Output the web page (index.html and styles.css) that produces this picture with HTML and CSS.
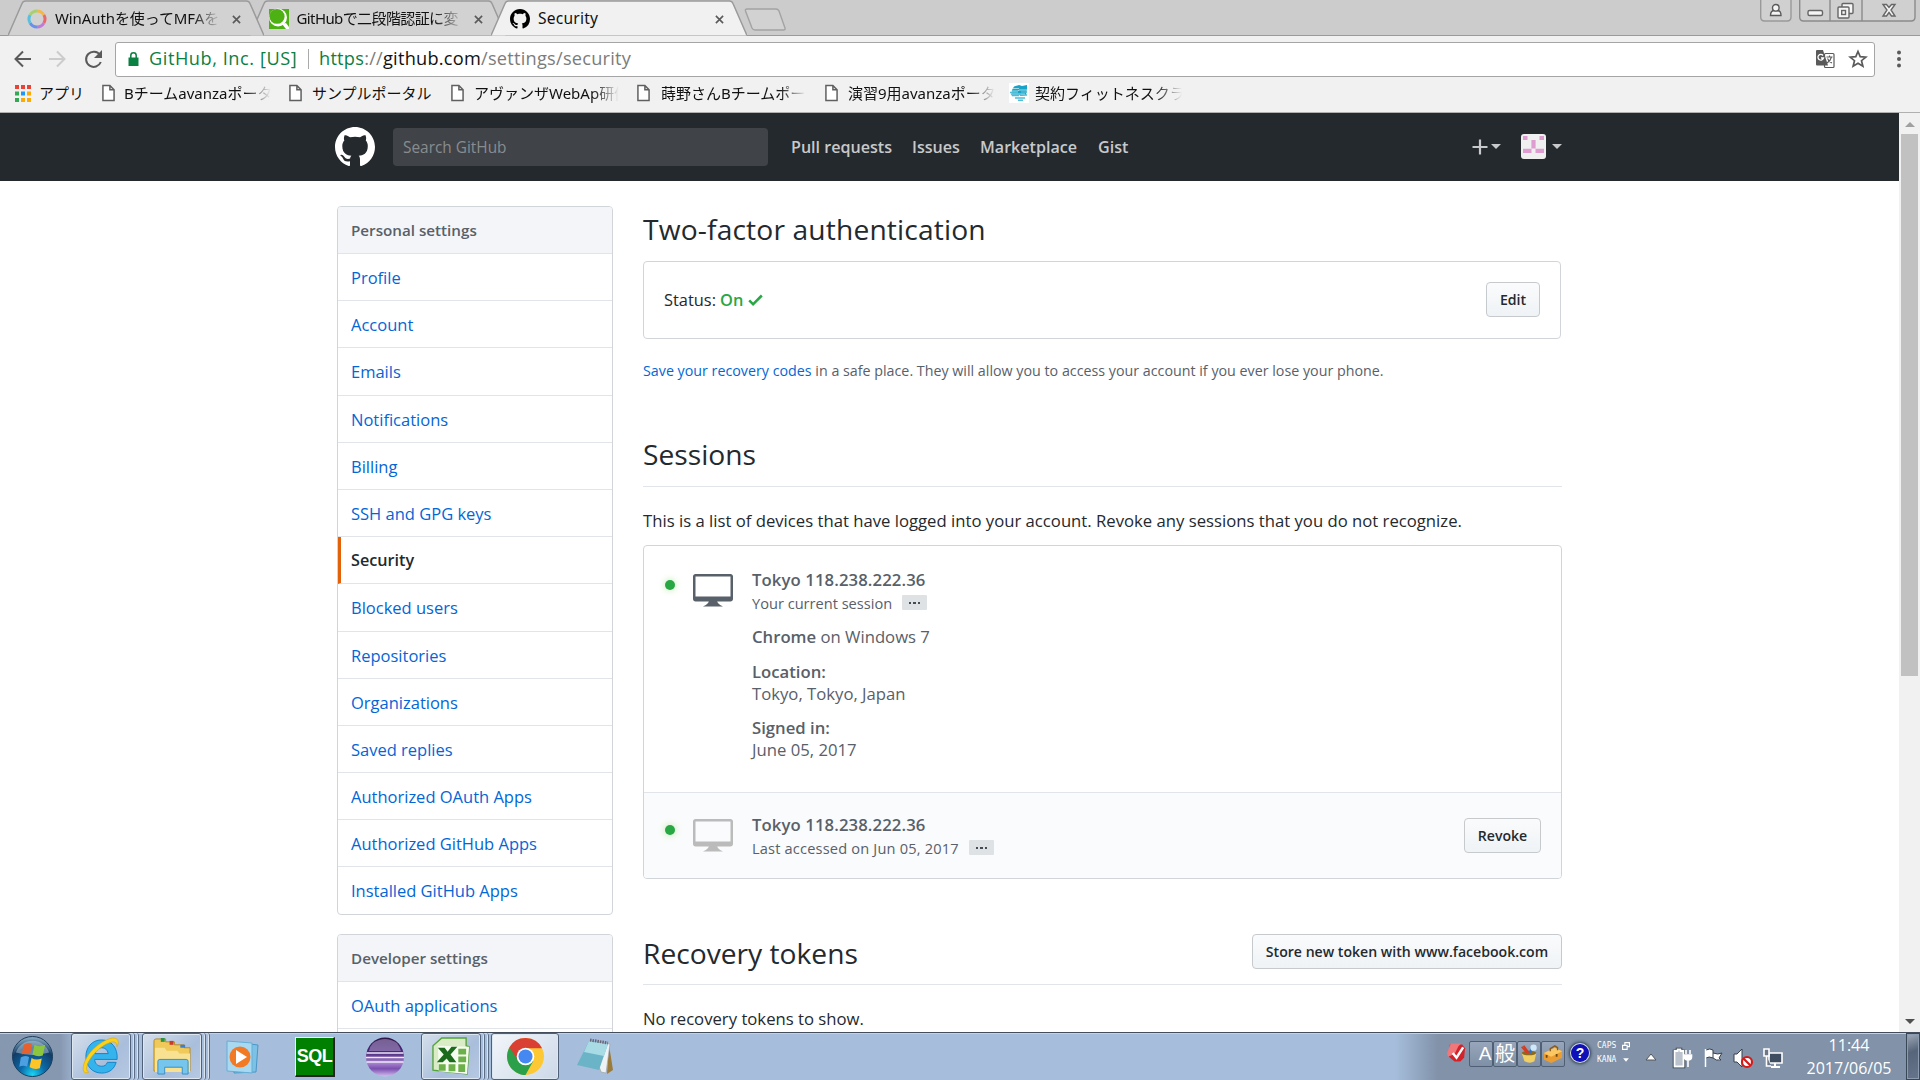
FILE: index.html
```html
<!DOCTYPE html>
<html lang="en">
<head>
<meta charset="utf-8">
<title>Security</title>
<link rel="stylesheet" href="styles.css">
</head>
<body>
<svg class="defs" width="0" height="0">
  <defs>
    <symbol id="mark" viewBox="0 0 16 16"><path d="M8 0C3.58 0 0 3.58 0 8c0 3.54 2.29 6.53 5.47 7.59.4.07.55-.17.55-.38 0-.19-.01-.82-.01-1.49-2.01.37-2.53-.49-2.69-.94-.09-.23-.48-.94-.82-1.13-.28-.15-.68-.52-.01-.53.63-.01 1.08.58 1.23.82.72 1.21 1.87.87 2.33.66.07-.52.28-.87.51-1.07-1.78-.2-3.64-.89-3.64-3.95 0-.87.31-1.59.82-2.15-.08-.2-.36-1.02.08-2.12 0 0 .67-.21 2.2.82.64-.18 1.32-.27 2-.27.68 0 1.36.09 2 .27 1.53-1.04 2.2-.82 2.2-.82.44 1.1.16 1.92.08 2.12.51.56.82 1.27.82 2.15 0 3.07-1.87 3.75-3.65 3.95.29.25.54.73.54 1.48 0 1.07-.01 1.93-.01 2.2 0 .21.15.46.55.38A8.013 8.013 0 0 0 16 8c0-4.42-3.58-8-8-8z"/></symbol>
    <symbol id="desktop" viewBox="0 0 16 16"><path d="M15 2H1c-.55 0-1 .45-1 1v9c0 .55.45 1 1 1h5.34c-.25.61-.86 1.39-2.34 2h8c-1.48-.61-2.09-1.39-2.34-2H15c.55 0 1-.45 1-1V3c0-.55-.45-1-1-1zm0 9H1V3h14v8z"/></symbol>
    <symbol id="tabshape" viewBox="0 0 256 36"><path d="M0 35.500L14 3.500Q15 1 17.500 1H238.500Q241 1 242 3.500L256 35.500" stroke="#9a9a9a" stroke-width="1.500"/></symbol>
    <symbol id="close" viewBox="0 0 10 10"><path d="M1 1l8 8M9 1l-8 8" stroke="#5a5a5a" stroke-width="1.800" fill="none"/></symbol>
    <symbol id="page" viewBox="0 0 14 18"><path d="M1 1h7.500L13 5.500V17H1z M8.500 1v4.500H13" fill="#fff" stroke="#5f5f5f" stroke-width="1.600"/></symbol>
  </defs>
</svg>

<div class="tabstrip">
  <div class="tab tab-a">
    <svg class="shape"><use href="#tabshape"/></svg>
    <svg class="fav" viewBox="0 0 20 20" fill="none" stroke-width="3"><path d="M10 2a8 8 0 0 1 6.900 4" stroke="#f2b84b"/><path d="M16.900 6a8 8 0 0 1 0 8" stroke="#e8686d"/><path d="M16.900 14A8 8 0 0 1 10 18" stroke="#c07ad8"/><path d="M10 18a8 8 0 0 1-6.900-4" stroke="#6c8fe8"/><path d="M3.100 14a8 8 0 0 1 0-8" stroke="#59bfe0"/><path d="M3.100 6A8 8 0 0 1 10 2" stroke="#a9cf70"/></svg>
    <span class="tab-title t1">WinAuthを使ってMFAを</span>
    <svg class="x"><use href="#close"/></svg>
  </div>
  <div class="tab tab-b">
    <svg class="shape"><use href="#tabshape"/></svg>
    <svg class="fav" viewBox="0 0 20 20"><path d="M0 0h20v20H0z" fill="#4db013"/><circle cx="9" cy="8.500" r="9" fill="#fff"/><ellipse cx="8" cy="7.400" rx="7.600" ry="7.400" fill="#4db013"/><path d="M13 15l4-1 3 4v2h-3z" fill="#fff"/></svg>
    <span class="tab-title t2">GitHubで二段階認証に変</span>
    <svg class="x"><use href="#close"/></svg>
  </div>
  <div class="tab tab-c">
    <svg class="shape"><use href="#tabshape"/></svg>
    <svg class="fav"><use href="#mark"/></svg>
    <span class="tab-title t3">Security</span>
    <svg class="x"><use href="#close"/></svg>
  </div>
  <svg class="newtab" viewBox="0 0 43 23"><path d="M3 1h29q2 0 3 2l6 17q.5 2-1.500 2H11q-2 0-3-2L1.500 3Q1 1 3 1z" fill="#d2d2d2" stroke="#a3a3a3" stroke-width="1.400"/></svg>
  <div class="wincontrols">
    <svg class="user" viewBox="0 0 32 22"><path d="M.7-3V17q0 4 4 4H27q4 0 4-4V-3" fill="#d0d0d0" stroke="#999" stroke-width="1.400"/><g fill="#f5f5f5" stroke="#5a5a5a" stroke-width="1.400"><path d="M10.500 15.500q0-5 4-5h2.500q4 0 4 5z"/><circle cx="15.800" cy="7.800" r="3.300"/></g></svg>
    <svg class="wbtns" viewBox="0 0 117 22"><path d="M.7-3V17q0 4 4 4H112q4 0 4-4V-3M31 0v21M63 0v21" fill="#d0d0d0" stroke="#8b8b8b" stroke-width="1.400"/><g fill="#f5f5f5" stroke="#666" stroke-width="1.400"><rect x="9" y="10.500" width="14.500" height="5" rx="1.500"/><rect x="43" y="3.500" width="11" height="10" rx="1"/><rect x="39" y="7" width="11" height="11" rx="1"/><rect x="42.700" y="10.500" width="3.800" height="4"/><path d="M84 4.500h3.500l2.500 3 2.500-3H96l-4 5.500 4 6h-3.500L90 12.500 87.500 16H84l4-6z"/></g></svg>
  </div>
</div>

<div class="toolbar">
  <svg class="navs" viewBox="0 0 92 24" fill="none" stroke-width="2"><path d="M18 12H3M10 4.500L2.500 12l7.500 7.500" stroke="#5a5a5a"/><path d="M36 12h15M44 4.500l7.500 7.500-7.500 7.500" stroke="#ccc"/><path d="M87 8a7.600 7.600 0 1 0 .8 7" stroke="#5a5a5a"/><path d="M89 3v8h-8z" fill="#5a5a5a"/></svg>
  <div class="omnibox">
    <svg class="lock" viewBox="0 0 11 14"><path d="M.5 5.500h10V14H.5z" fill="#0b8043"/><path d="M2.800 6V3.500a2.700 2.700 0 0 1 5.400 0V6" fill="none" stroke="#0b8043" stroke-width="1.500"/></svg>
    <span class="org">GitHub, Inc. [US]</span>
    <span class="vline"></span>
    <span class="url"><b>https</b>://<i>github.com</i>/settings/security</span>
    <svg class="translate" viewBox="0 0 19 19"><rect x="8.500" y="3.500" width="9.500" height="14" rx="1" fill="#fff" stroke="#5a5a5a" stroke-width="1.200"/><path d="M1 0h6l5 15.500H1a1 1 0 0 1-1-1V1a1 1 0 0 1 1-1z" fill="#5a5a5a"/><path d="M7 5.500A2.800 2.800 0 1 0 7.500 8H5" fill="none" stroke="#fff" stroke-width="1.300"/><path d="M10.500 7h6M13.500 5.500V7M15.500 7q-1 4-4.500 6M11.500 8.500q1.500 3.500 4.500 4.500" fill="none" stroke="#5a5a5a" stroke-width="1.100"/></svg>
    <svg class="star" viewBox="0 0 18 18"><path d="M9 1.500l2.200 5.200 5.600.4-4.300 3.600 1.400 5.500L9 13.200l-4.900 3 1.400-5.500L1.200 7.100l5.600-.4z" fill="none" stroke="#5a5a5a" stroke-width="1.700"/></svg>
  </div>
  <svg class="dots" viewBox="0 0 4 18" fill="#5a5a5a"><circle cx="2" cy="2.500" r="2"/><circle cx="2" cy="9" r="2"/><circle cx="2" cy="15.500" r="2"/></svg>
</div>

<div class="bookmarks">
  <svg class="apps" viewBox="0 0 16 17"><path d="M0 0h4v4H0zM6 0h4v4H6zM12 0h4v4h-4z" fill="#ea4335"/><path d="M0 6.500h4v4H0zM0 13h4v4H0z" fill="#34a853"/><path d="M6 6.500h4v4H6z" fill="#2196f3"/><path d="M12 6.500h4v4h-4zM6 13h4v4H6zM12 13h4v4h-4z" fill="#fbab05"/></svg>
  <span class="bm b0">アプリ</span>
  <svg class="pg"><use href="#page"/></svg><span class="bm fade b1">Bチームavanzaポータ</span>
  <svg class="pg"><use href="#page"/></svg><span class="bm b2">サンプルポータル</span>
  <svg class="pg"><use href="#page"/></svg><span class="bm fade b3">アヴァンザWebAp研修</span>
  <svg class="pg"><use href="#page"/></svg><span class="bm fade b4">蒔野さんBチームポー</span>
  <svg class="pg"><use href="#page"/></svg><span class="bm fade b5">演習9用avanzaポータ</span>
  <svg class="pg fit" viewBox="0 0 20 20"><path d="M0 0h20v20H0z" fill="#fff"/><path d="M5 3.500l5-1.500 3 1 5-1v4l-1 6-5 1-2-1-6 1-2-1 1-5z" fill="#18a3c8"/><path d="M1 9.500h8M12 9h6M3 12.500h7M12 12h6M6 15h10M9 17.300h5" stroke="#4dbdd8" stroke-width="1.500" fill="none"/><path d="M2 8h7l1-1h8M2 11h14M4 5.500h6" stroke="#d5f1f7" stroke-width=".7" fill="none"/></svg><span class="bm fade b6">契約フィットネスクラ</span>
</div>

<div class="viewport">
  <div class="page">
    <header class="header">
      <svg class="logo"><use href="#mark"/></svg>
      <div class="search">Search GitHub</div>
      <nav class="hnav"><a class="n1">Pull requests</a><a class="n2">Issues</a><a class="n3">Marketplace</a><a class="n4">Gist</a></nav>
      <svg class="plus" viewBox="0 0 16 16"><path d="M8 .5v15M.5 8h15" stroke="#c8c9ca" stroke-width="2.200"/></svg>
      <span class="caret c1"></span>
      <svg class="avatar" viewBox="0 0 25 25"><rect width="25" height="25" rx="3" fill="#f0f0f0"/><path d="M2 2h4.500v4H2zM18.500 2H23v4h-4.500zM10.400 6h4.200v8.500h-4.200zM2 14.700h8.500v4.200H2zM14.500 14.700H23v4.200h-8.500z" fill="#df9cd0"/></svg>
      <span class="caret"></span>
    </header>
    <div class="container">
      <aside class="side">
        <nav class="menu">
          <div class="menu-head">Personal settings</div>
          <a>Profile</a><a>Account</a><a>Emails</a><a>Notifications</a><a>Billing</a><a>SSH and GPG keys</a><a class="current">Security</a><a>Blocked users</a><a>Repositories</a><a>Organizations</a><a>Saved replies</a><a>Authorized OAuth Apps</a><a>Authorized GitHub Apps</a><a>Installed GitHub Apps</a>
        </nav>
        <nav class="menu second">
          <div class="menu-head">Developer settings</div>
          <a>OAuth applications</a><a></a>
        </nav>
      </aside>
      <main class="main">
        <h2 class="tfa">Two-factor authentication</h2>
        <div class="status">
          <span class="st">Status:</span><b>On</b>
          <svg class="check" viewBox="0 3 12 10"><path d="M12 5l-8 8-4-4 1.500-1.500L4 10l6.500-6.500z"/></svg>
          <button class="btn edit">Edit</button>
        </div>
        <p class="note"><a>Save your recovery codes</a> in a safe place. They will allow you to access your account if you ever lose your phone.</p>
        <h2 class="ruled sessions-h">Sessions</h2>
        <p class="intro">This is a list of devices that have logged into your account. Revoke any sessions that you do not recognize.</p>
        <div class="sessions">
          <div class="session first">
            <span class="dot"></span>
            <svg class="device"><use href="#desktop"/></svg>
            <div class="info">
              <b class="ip">Tokyo 118.238.222.36</b>
              <div class="small"><span class="s1">Your current session</span><span class="chip"><i></i><i></i><i></i></span></div>
              <div class="line chrome"><b>Chrome</b> on Windows 7</div>
              <div class="line loc"><b>Location:</b><br>Tokyo, Tokyo, Japan</div>
              <div class="line signed"><b>Signed in:</b><br>June 05, 2017</div>
            </div>
          </div>
          <div class="session other">
            <span class="dot"></span>
            <svg class="device dim"><use href="#desktop"/></svg>
            <div class="info">
              <b class="ip">Tokyo 118.238.222.36</b>
              <div class="small"><span class="s2">Last accessed on Jun 05, 2017</span><span class="chip"><i></i><i></i><i></i></span></div>
            </div>
            <button class="btn revoke">Revoke</button>
          </div>
        </div>
        <div class="ruled rec"><h2>Recovery tokens</h2><button class="btn store">Store new token with www.facebook.com</button></div>
        <p class="none">No recovery tokens to show.</p>
      </main>
    </div>
  </div>
  <div class="scroll"><span class="up"></span><span class="thumb"></span><span class="down"></span></div>
</div>

<div class="taskbar">
  <div class="start"><svg viewBox="0 0 44 44"><defs><radialGradient id="orb" cx=".5" cy=".95" r=".9"><stop offset="0" stop-color="#19d4f5"/><stop offset=".35" stop-color="#0b6aa8"/><stop offset=".75" stop-color="#123c66"/><stop offset="1" stop-color="#7ea0b8"/></radialGradient></defs><circle cx="22" cy="22" r="20.500" fill="url(#orb)" stroke="#1c3c5c"/><path d="M5 18a18 18 0 0 1 34 0q-17 5-34 0z" fill="#b8cede" opacity=".5"/><path d="M13 10q4-3 8.500-1l-2 11q-4.500-2-8.500 0z" fill="#e8612c"/><path d="M24 10q5 3 11 0l-2.500 11q-5 2-10.500-1z" fill="#8cc63f"/><path d="M10 23q4-3 8.500-.5l-2 10q-4-2-8 0z" fill="#4c9fe0"/><path d="M21 23.500q4.500 3 10.500.5l-2 10q-5 2-10.500-1z" fill="#fdc526"/></svg></div>
  <div class="task ie"><svg viewBox="0 0 40 40"><path d="M20 3C10 3 4 11 4 20s6 17 16 17c8 0 13-4 15-11h-9c-1 3-3 4-6 4-4 0-7-3-7-7h23C37 11 30 3 20 3zm-7 14c1-4 3-6 7-6s6 2 7 6z" fill="#35b3ec" stroke="#1684c8"/><path d="M7 36C-2 40 0 26 9 15 20 3 35-3 37 4c.500 2 0 4-1 6 0-5-3-6-8-4C19 9 7 21 5 30c-1 3 0 5 2 6z" fill="#fbd119" stroke="#d9a400" stroke-width=".6"/></svg></div><span class="edge"></span><span class="edge e2"></span>
  <div class="task ex"><svg viewBox="0 0 40 40"><path d="M1 4q0-2 2-2h10v3h9v3h10v3h6v24H1z" fill="#efc95a" stroke="#b48a2c"/><path d="M2 11h10l2 3h11l2 3h11v19H2z" fill="#f8e190"/><path d="M8 1h4v4H8z" fill="#27944a"/><path d="M17 4h4v4h-4z" fill="#c93a28"/><path d="M28 8h5v3h-5z" fill="#3b7fd0"/><path d="M5 38V25q0-2 2-2h27q2 0 2 2v13h-6v-7H12v7z" fill="#75c5ec" stroke="#3a8fc4"/></svg></div><span class="edge"></span><span class="edge e2"></span>
  <svg class="ico wmp" viewBox="0 0 34 36"><path d="M7 3l25 3-2 27-22 1z" fill="#7dc2e4" stroke="#4a96c8"/><path d="M1 2l25 2v30L1 32z" fill="#a9d9f0" stroke="#65aed6"/><circle cx="14" cy="18" r="10.500" fill="#f37a25"/><path d="M10 11l11 7-11 7z" fill="#fff"/></svg>
  <div class="sql">SQL</div>
  <svg class="ico ecl" viewBox="0 0 40 40"><defs><linearGradient id="ec" x2="0" y2="1"><stop offset="0" stop-color="#2d1548"/><stop offset=".4" stop-color="#4c2a80"/><stop offset=".65" stop-color="#a986cf"/><stop offset=".8" stop-color="#7a4fb0"/><stop offset="1" stop-color="#d5bff0"/></linearGradient></defs><ellipse cx="20" cy="20" rx="19" ry="19.500" fill="url(#ec)"/><path d="M8 6q12-8 24 0 3 4 4 8H4q1-5 4-8z" fill="#bca9d6" opacity=".5"/><path d="M1.500 16h37M1 20.500h38M1.500 25h37" stroke="#eee8f6" stroke-width="1.300"/></svg>
  <div class="task xl"><svg viewBox="0 0 40 40"><path d="M10 1h25v8l3 1-2 28L1 34V9z" fill="#d9ecc6" stroke="#55a33a" stroke-width="1.400"/><path d="M6 9l32 1-2 28-29-3z" fill="#f6fbef"/><path d="M27 12h8v6h-8zM27 20h8v6h-8zM7 28h7v6.500H7zM17 28h7v7h-7zM27 28h7v8h-7z" fill="#6cb04a"/><path d="M6 11h7l3 4 4-5h6l-7 8 6 8h-7l-3-4-4 4H5l7-8z" fill="#1c6b1c"/></svg></div><span class="edge"></span><span class="edge e2"></span>
  <div class="task chr"><svg viewBox="0 0 40 40"><circle cx="20" cy="20" r="19" fill="#fcc934"/><path d="M20 20L3.600 10.500A19 19 0 0 0 20 39l8-14.500z" fill="#2c9f4a"/><path d="M20 11.500h17A19 19 0 0 0 3.500 10.600L12.500 24z" fill="#da3f33"/><circle cx="20" cy="20" r="9" fill="#fff"/><circle cx="20" cy="20" r="7.200" fill="#4688f1"/></svg></div>
  <svg class="ico note-i" viewBox="0 0 38 38"><path d="M33 7l4 25-6 4z" fill="#9a7b3c"/><path d="M14 3l20 3-4 29-5-1z" fill="#eef2f4" stroke="#999" stroke-width=".6"/><path d="M13 3l19 3-9 26L1 27z" fill="#6bb4c8"/><path d="M13 3l19 3-4 12L8 14z" fill="#a8dbe4"/><path d="M14 2l18 3" stroke="#667" stroke-width="3" stroke-dasharray="1.500 1"/></svg>
  <div class="tray">
    <svg class="tred" viewBox="0 0 20 20"><path d="M3 1h13l3 4-1 10-4 4H8l-6-5z" fill="#d3222a"/><path d="M4 0h11l-3 3-4 8-7 3-1-4z" fill="#f0777a"/><path d="M6 10l4 5 7-11" fill="none" stroke="#fff" stroke-width="2.600"/></svg>
    <div class="ime a">A</div><div class="ime han">般</div>
    <div class="ime"><svg viewBox="0 0 22 22"><path d="M3 10h16l-2 9q-5 3-11 0z" fill="#f1cf62"/><ellipse cx="11" cy="10" rx="8" ry="2.500" fill="#8a6a20"/><path d="M3 3l6 7M5 2l6 8" stroke="#d33c22" stroke-width="2"/><path d="M12 10l3-8" stroke="#2f6fc0" stroke-width="2.500"/><circle cx="16" cy="4" r="3.500" fill="#cfe9fb"/></svg></div>
    <div class="ime"><svg viewBox="0 0 22 22"><path d="M1 10l12-6 8 4v7l-12 6-8-4z" fill="#ec9d32"/><path d="M1 10l12-6 8 4-12 6z" fill="#fbc763"/><path d="M8 8V5l5-3 3 2v3" fill="none" stroke="#8a5a1a" stroke-width="1.500"/><path d="M4 12v3M15 11v3" stroke="#704610" stroke-width="2"/></svg></div>
    <div class="help">?</div>
    <div class="kbd"><div>CAPS<svg viewBox="0 0 7 7"><path d="M2.500 3V.5h4v3.500H5M.5 3h4v3.500h-4z" fill="none" stroke="#fff"/></svg></div><div>KANA<svg viewBox="0 0 7 7"><path d="M1 2h5L3.500 5z" fill="#fff"/></svg></div></div>
    <svg class="more" viewBox="0 0 12 8"><path d="M6 1l5 6H1z" fill="#fff" stroke="#555"/></svg>
    <svg class="tri" viewBox="0 0 20 20"><path d="M1 3h3V1h4v2h3v16H1z" fill="#8b97a8" stroke="#303840" stroke-width="2.500"/><path d="M1.500 3h3V1.500h3V3h3v15.500h-9z" fill="#b9c2cd" stroke="#fff" stroke-width="1.800"/><path d="M13 2v4M17 2v4M11.500 7h7v2q0 3-3.500 3t-3.500-3zM15 12v7" fill="#fff" stroke="#fff" stroke-width="1.600"/></svg>
    <svg class="tri t-flag" viewBox="0 0 20 20"><path d="M1.500 1v18M2 2q4-2 7 0v8q-4-2-7 0M9 5q5 2 9 0l-3 5 2 2q-5 1-8-2" fill="#fff" stroke="#39414c" stroke-width="1"/><path d="M1.500 1v18" stroke="#fff" stroke-width="1.500"/></svg>
    <svg class="tri t-snd" viewBox="0 0 20 20"><path d="M1 6h3l5-5v18l-5-5H1z" fill="#fff" stroke="#39414c"/><circle cx="14" cy="14" r="5" fill="#fff" stroke="#d61a1a" stroke-width="2.200"/><path d="M10.500 10.500l7 7" stroke="#d61a1a" stroke-width="2.200"/></svg>
    <svg class="tri t-net" viewBox="0 0 20 20"><path d="M6 5h13v10H6z" fill="#3e4d60" stroke="#fff" stroke-width="1.600"/><path d="M12 15v3M8 19h9" stroke="#fff" stroke-width="2"/><path d="M1 1h5v7H1zM3.500 8v10H8" fill="#6c7888" stroke="#fff" stroke-width="1.600"/></svg>
    <div class="clock"><div>11:44</div><div class="date">2017/06/05</div></div>
    <div class="peek"></div>
  </div>
</div>
</body>
</html>
```
FILE: styles.css
```css
* { box-sizing: border-box; }
body { margin: 0; width: 1920px; height: 1080px; overflow: hidden; display: flex; flex-direction: column; background: #fff; font-family: "Open Sans", "Noto Sans CJK JP", sans-serif; color: #24292e; }
svg { display: block; flex: none; overflow: visible; }
.defs { position: absolute; }
h2, p { margin: 0; font-weight: 400; }
b { font-weight: 600; }
i { font-style: normal; }

/* browser tabs */
.tabstrip { height: 36px; flex: none; background: #ccc; border-bottom: 1.5px solid #9a9a9a; display: flex; padding-left: 8px; position: relative; }
.tab { position: relative; width: 256px; height: 36px; flex: none; display: flex; align-items: center; padding: 0 21px 2px 19px; z-index: 2; }
.tab + .tab { margin-left: -14.5px; }
.tab-b { z-index: 1; }
.tab-c { z-index: 3; }
.shape { position: absolute; left: 0; top: 0; width: 256px; height: 36px; z-index: -1; fill: #d2d2d2; }
.tab-c .shape { fill: #f1f1f1; }
.fav { width: 20px; height: 20px; margin-top: 4px; }
.tab-title { font-family: "Noto Sans", "Noto Sans CJK JP", sans-serif; font-size: 15px; line-height: 24px; margin: 2px 0 0 8px; width: 167px; overflow: hidden; white-space: nowrap; color: #111; }
.t1, .t2 { mask-image: linear-gradient(90deg, #000 82%, transparent); }
.t1 { letter-spacing: -.1px; }
.t2 { letter-spacing: -.6px; }
.t3 { font-size: 15.6px; letter-spacing: .2px; }
.x { width: 9px; height: 9px; margin: 4px 0 0 10px; }
.newtab { width: 43px; height: 23px; margin: 8px 0 0 -3px; z-index: 4; }
.wincontrols { margin-left: auto; display: flex; gap: 7px; padding-right: 4px; overflow: hidden; height: 23px; }
.user { width: 32px; height: 22px; }
.wbtns { width: 117px; height: 22px; }

/* address bar */
.toolbar { height: 43px; flex: none; background: #f1f1f1; display: flex; align-items: center; padding: 3px 0 0 13px; }
.navs { width: 92px; height: 24px; }
.omnibox { margin-left: 10px; width: 1760px; height: 35px; background: #fff; border: 1px solid #a5a5a5; border-radius: 3px; display: flex; align-items: center; padding-left: 12px; font-size: 18.2px; white-space: nowrap; }
.lock { width: 11px; height: 14px; }
.org, .url { line-height: 28px; padding-bottom: 2px; }
.org { color: #0b8043; margin-left: 10px; width: 159px; letter-spacing: .54px; }
.vline { width: 1px; height: 20px; background: #aaa; }
.url { color: #7c7c7c; margin-left: 10px; letter-spacing: .24px; }
.url b { font-weight: 400; color: #0b8043; }
.url i { color: #111; }
.translate { width: 19px; height: 19px; margin-left: auto; }
.star { width: 18px; height: 18px; margin: 0 7px 0 14px; }
.dots { width: 4px; height: 18px; margin-left: 22px; }

/* bookmarks */
.bookmarks { height: 34px; flex: none; background: #f1f1f1; border-bottom: 1px solid #b0b0b0; display: flex; align-items: center; padding-left: 15px; padding-bottom: 5px; }
.apps { width: 16px; height: 17px; }
.bm { font-family: "Noto Sans", "Noto Sans CJK JP", sans-serif; font-size: 15px; line-height: 24px; color: #111; margin-left: 9px; white-space: nowrap; overflow: hidden; flex: none; }
.fade { mask-image: linear-gradient(90deg, #000 82%, transparent); }
.pg { width: 13px; height: 18px; }
.fit { width: 20px; height: 20px; }
.b0 { width: 63px; margin-left: 8px; }
.b1 { width: 147px; margin-right: 18px; }
.b2 { width: 121px; margin-left: 10px; margin-right: 18px; }
.b3 { width: 145px; margin-left: 10px; margin-right: 18px; }
.b4 { width: 145px; margin-left: 11px; margin-right: 19px; }
.b5 { width: 147px; margin-left: 10px; margin-right: 14px; }
.b6 { width: 147px; margin-left: 6px; }

/* page */
.viewport { flex: none; height: 919px; display: flex; overflow: hidden; }
.page { width: 1899px; height: 919px; overflow: hidden; }
.header { height: 68px; background: #24292e; display: flex; align-items: center; padding-left: 335px; padding-bottom: 1px; }
.logo { width: 40px; height: 40px; fill: #fff; }
.search { margin-left: 18px; width: 375px; height: 38px; border-radius: 4px; background: #404448; color: #898c8f; font-size: 15.4px; line-height: 40px; padding-left: 10px; }
.hnav { display: flex; margin-left: 23px; width: 681px; font-size: 16.1px; font-weight: 600; color: #c8c9ca; white-space: nowrap; line-height: 40px; }
.n1 { width: 121px; } .n2 { width: 68px; } .n3 { width: 118px; }
.plus { width: 16px; height: 16px; }
.caret { border: 5px solid transparent; border-top-color: #c8c9ca; border-bottom: 0; }
.c1 { margin: 0 20px 0 3px; }
.plus, .avatar, .caret { flex: none; }
.avatar { width: 25px; height: 25px; margin-right: 6px; }

.container { display: flex; padding: 25px 0 0 337px; }
.side { width: 276px; flex: none; }
.menu { border: 1px solid #d1d5da; border-radius: 4px; overflow: hidden; font-size: 16.5px; }
.menu > * { display: block; height: 47.2px; line-height: 47px; padding-left: 13px; border-bottom: 1px solid #e1e4e8; }
.menu > :last-child { border-bottom: 0; height: 46.2px; }
.menu .menu-head { background: #f3f5f8; color: #586069; font-size: 15.2px; font-weight: 600; height: 47px; line-height: 46px; }
.menu a { color: #0366d6; }
.menu .current { color: #24292e; font-weight: 600; border-left: 3px solid #e36209; padding-left: 10px; font-size: 16.2px; }
.second { margin-top: 19px; }

.main { width: 919px; margin-left: 30px; font-size: 16.7px; }
h2 { font-size: 28.2px; line-height: 46px; height: 45px; }
.tfa { letter-spacing: .15px; }
.status { margin-top: 10px; height: 78px; width: 918px; border: 1px solid #d1d5da; border-radius: 4px; display: flex; align-items: center; padding: 0 20px 1px; font-size: 16.4px; }
.st { width: 56px; }
.status b { color: #28a745; width: 28px; }
.check { width: 15px; height: 12px; fill: #28a745; }
.btn { margin: 0; padding: 0; border: 1px solid #c6cacd; border-radius: 4px; background: linear-gradient(#fafbfc, #eff3f6); color: #24292e; font-family: "Open Sans", sans-serif; font-weight: 600; font-size: 14.1px; height: 35px; }
.edit { margin-left: auto; width: 54px; }
.note { color: #586069; font-size: 14.27px; line-height: 23px; height: 22px; margin-top: 20px; white-space: nowrap; }
.note a { color: #0366d6; }
.ruled { border-bottom: 1px solid #e1e4e8; height: 55.5px; }
.sessions-h { margin-top: 50px; }
.intro { line-height: 26px; margin-top: 21px; white-space: nowrap; }
.sessions { margin-top: 11px; border: 1px solid #d1d5da; border-radius: 4px; overflow: hidden; color: #586069; }
.session { display: flex; padding: 23px 20px 0 21px; }
.first { height: 247px; border-bottom: 1px solid #e1e4e8; }
.other { height: 85px; background: #fafbfc; padding-top: 21px; }
.dot { width: 10px; height: 10px; border-radius: 50%; background: #28a745; box-shadow: 0 0 7px #b7e6a5; margin-top: 11px; }
.device { width: 40px; height: 40px; margin-left: 18px; fill: #586069; }
.dim { fill: #bbb; }
.info { margin-left: 19px; line-height: 22px; flex: 1; white-space: nowrap; }
.ip { display: block; letter-spacing: .11px; }
.small { display: flex; align-items: center; font-size: 14.6px; height: 22px; margin-top: 1px; }
.s2 { letter-spacing: .18px; }
.chip { width: 25px; height: 15px; border-radius: 1px; background: #dfe2e5; margin-left: 10px; display: flex; gap: 2px; justify-content: center; align-items: center; }
.chip i { width: 2.500px; height: 2px; background: #444d56; }
.chrome { margin-top: 12px; }
.loc { margin-top: 13px; }
.signed { margin-top: 12px; }
.revoke { width: 77px; margin-top: 4px; }
.rec { margin-top: 51px; display: flex; justify-content: space-between; }
.store { width: 310px; margin-top: 4px; }
.none { line-height: 26px; margin-top: 21px; }

.scroll { width: 21px; background: #f1f1f1; display: flex; flex-direction: column; align-items: center; }
.up { border: 5px solid transparent; border-top: 0; border-bottom-color: #a0a0a0; margin-top: 9px; }
.thumb { width: 17px; height: 542px; background: #c1c1c1; margin-top: 7px; }
.down { border: 5px solid transparent; border-bottom: 0; border-top-color: #505050; margin: auto 0 8px; }

/* taskbar */
.taskbar { height: 48px; flex: none; border-top: 1px solid #444d5c; box-shadow: inset 0 1px #c1d2e6; background: linear-gradient(90deg, #8697b0 0, #8697b0 60px, #a6bedc 80px, #a6bedc 1395px, #8192a9 1438px); display: flex; align-items: center; }
.start { width: 71px; padding-left: 11px; }
.start svg { width: 43px; height: 43px; }
.task { width: 60px; height: 47px; border: 1px solid #4f6078; border-radius: 3px; background: linear-gradient(135deg, #d5dfec, #a9bedb 60%, #b6c9e2); box-shadow: inset 0 0 0 1px #dde7f2; display: flex; align-items: center; justify-content: center; flex: none; }
.task svg { width: 39px; height: 39px; }
.edge { width: 4px; height: 47px; border-right: 1px solid #5c6d86; box-shadow: inset -1px 0 #dbe5f1; border-radius: 0 3px 3px 0; }
.e2 { margin-right: 3px; }
.ico { flex: none; }
.wmp { width: 34px; height: 36px; margin-left: 13px; }
.sql { width: 40px; height: 40px; margin-left: 35px; background: #008000; border: 1px solid #eee; border-right: 2px solid #222; border-bottom: 2px solid #222; color: #fff; font: bold 18px/36px "Liberation Sans", sans-serif; text-align: center; letter-spacing: -.5px; flex: none; }
.ecl { width: 40px; height: 40px; margin-left: 30px; }
.xl { margin-left: 16px; }
.chr { width: 68px; margin-left: -1px; background: linear-gradient(135deg, #f3f6fa, #ccd8e8); }
.note-i { width: 38px; height: 38px; margin-left: 17px; }
.tray { margin-left: auto; display: flex; align-items: center; width: 473px; flex: none; height: 47px; color: #fff; }
.tred { width: 19px; height: 20px; margin: -7px 3px 0 0; }
.ime { width: 24px; height: 26px; margin-top: -6px; border: 1px solid #4f5f74; border-radius: 2px; background: linear-gradient(#97a6ba, #7f8fa5); display: flex; align-items: center; justify-content: center; font-size: 20px; line-height: 24px; overflow: hidden; flex: none; }
.ime svg { width: 20px; height: 20px; }
.a { padding-left: 8px; font-family: "Liberation Sans", sans-serif; font-size: 19px; }
.help { width: 18px; height: 18px; border-radius: 50%; background: #1010b8; box-shadow: 0 0 0 1px #d5dbe5, 0 0 3px 2px #345; font: bold 14px/18px "Liberation Sans", sans-serif; text-align: center; margin: -7px 0 0 6px; flex: none; }
.kbd { width: 35px; margin: -7px 0 0 8px; font: 8px/14px "DejaVu Sans Mono", monospace; }
.kbd div { display: flex; align-items: center; gap: 6px; }
.kbd svg { width: 8px; height: 8px; }
.more { width: 12px; height: 8px; margin-left: 13px; }
.tri { width: 20px; height: 20px; margin: 2px 0 0 16px; }
.t-flag { margin-left: 11px; }
.t-snd { margin-left: 9px; }
.t-net { margin-left: 10px; }
.clock { width: 110px; margin-left: 11px; text-align: center; font-size: 16px; line-height: 22.500px; flex: none; }
.peek { width: 14px; height: 47px; margin-left: 2px; border: 1px solid #3a4757; background: linear-gradient(160deg, #a0aab9, #56657a 40%, #66758b); box-shadow: inset 0 0 0 1px #8d9bb0; flex: none; }
```
